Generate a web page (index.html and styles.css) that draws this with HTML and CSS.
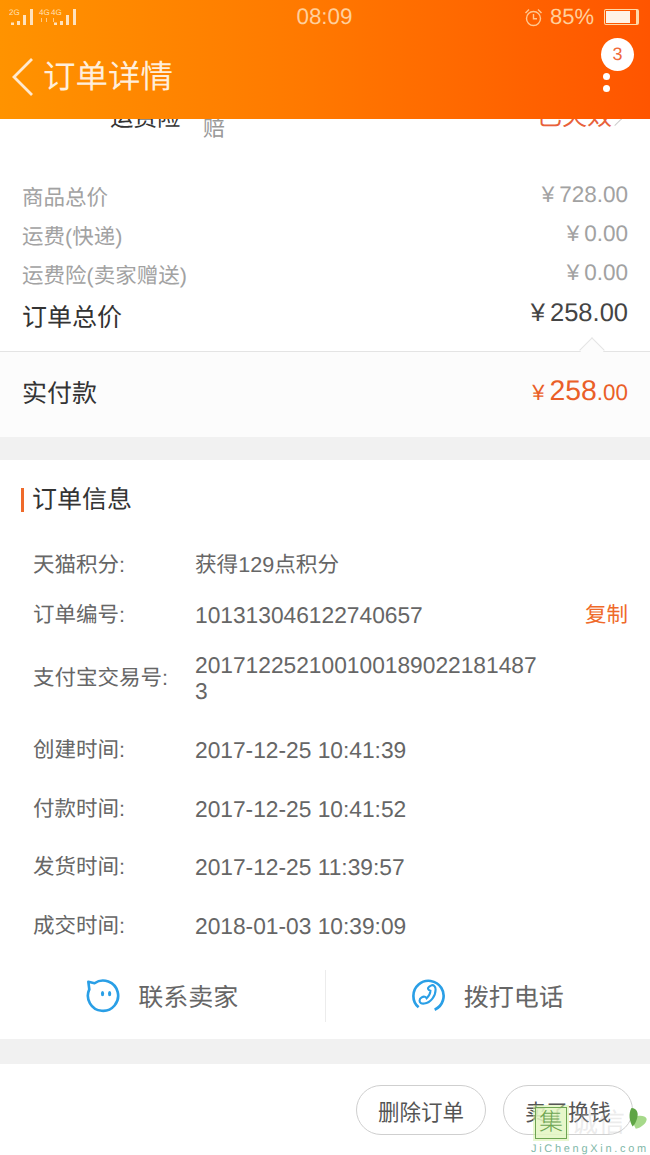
FILE: index.html
```html
<!doctype html>
<html lang="zh-CN">
<head>
  <meta charset="UTF-8">
  <title>订单详情</title>
  <link rel="stylesheet" href="styles.css">
</head>
<body>
  <div class="page">
    <header class="topbar">
      <div class="status">
        <svg class="signal" width="70" height="18" viewBox="0 0 70 18">
          <g fill="#ffe2bd">
            <path d="M2 14.500h3V17H2zM8 13h3v4H8zM14 7h3v10h-3zM21 1h3v16h-3z"/>
            <path d="M45 14.500h3V17h-3zM51 13h3v4h-3zM57 7h3v10h-3zM64 1h3v16h-3z"/>
            <text x="0" y="7" font-size="8">2G</text>
            <text x="30" y="7" font-size="8">4G</text>
            <text x="42" y="7" font-size="8">4G</text>
            <path d="M32 10h1v4h-1zM37 10h1v4h-1zM44 10h1v4h-1z" opacity=".7"/>
          </g>
        </svg>
        <div class="clock">08:09</div>
        <div class="status-right">
          <svg class="alarm" width="19" height="19" viewBox="0 0 19 19" fill="none" stroke="#ffc890" stroke-width="1.400"><circle cx="9.500" cy="10.500" r="7"/><path d="M9.500 6v4.800h3.500M1.500 5 5 1.500M17.500 5 14 1.500"/></svg>
          <span class="pct">85%</span>
          <div class="battery"><div class="battery-fill"></div></div>
        </div>
      </div>
      <div class="navbar">
        <svg class="back" width="24" height="40" viewBox="0 0 24 40" fill="none" stroke="#ffe9cf" stroke-width="2.800"><path d="M21 2 3 20l18 18"/></svg>
        <h1>订单详情</h1>
        <div class="more">
          <span class="dot"></span>
          <span class="dot"></span>
          <span class="badge">3</span>
        </div>
      </div>
    </header>

    <div class="clipped">
      <span class="clip-name">运费险</span>
      <span class="clip-note">赔</span>
      <span class="clip-status">已失效</span>
      <i class="chev"></i>
    </div>

    <section class="prices">
      <div class="price-row"><span>商品总价</span><span class="money">¥<b>728.00</b></span></div>
      <div class="price-row"><span>运费(快递)</span><span class="money">¥<b>0.00</b></span></div>
      <div class="price-row"><span>运费险(卖家赠送)</span><span class="money">¥<b>0.00</b></span></div>
      <div class="price-row total"><span>订单总价</span><span class="money">¥<b>258.00</b></span></div>
    </section>

    <section class="paid">
      <span class="paid-label">实付款</span>
      <span class="paid-money">¥<b>258</b><small>.00</small></span>
    </section>

    <section class="info">
      <h2>订单信息</h2>
      <div class="info-row r1"><span class="k">天猫积分:</span><span class="v">获得129点积分</span></div>
      <div class="info-row r2"><span class="k">订单编号:</span><span class="v">101313046122740657</span><span class="copy">复制</span></div>
      <div class="info-row r3"><span class="k">支付宝交易号:</span><span class="v wrap">2017122521001001890221814873</span></div>
      <div class="info-row r4 first"><span class="k">创建时间:</span><span class="v">2017-12-25 10:41:39</span></div>
      <div class="info-row r4"><span class="k">付款时间:</span><span class="v">2017-12-25 10:41:52</span></div>
      <div class="info-row r4"><span class="k">发货时间:</span><span class="v">2017-12-25 11:39:57</span></div>
      <div class="info-row r4"><span class="k">成交时间:</span><span class="v">2018-01-03 10:39:09</span></div>
      <div class="contact">
        <div class="contact-item">
          <svg width="34" height="34" viewBox="0 0 36 36" fill="none" stroke="#2a9fe6" stroke-width="2.800"><path d="M9 4.500A16 16 0 1 1 3.500 11L2.500 3z" stroke-linejoin="round"/><ellipse cx="17.500" cy="15.500" rx="1.700" ry="2.800" fill="#2a9fe6" stroke="none"/><ellipse cx="25" cy="15.500" rx="1.700" ry="2.800" fill="#2a9fe6" stroke="none"/></svg>
          <span>联系卖家</span>
        </div>
        <div class="contact-item">
          <svg width="34" height="34" viewBox="0 0 36 36" fill="none" stroke="#2a9fe6" stroke-width="2.800"><path d="M24 32.500A16 16 0 1 0 7 30"/><path d="M20 7c3-1.500 5 1 5 4 0 7-5 14-12 15-3 .5-5-1-5-3 0-3 4-5 6-4 1 .5 1.500 1.500 1.500 1.500 2-2 4-5 4-8 0 0-2-.5-2.500-2-.500-1.500 1-2.500 3-3.500z" stroke-width="2.200"/></svg>
          <span>拨打电话</span>
        </div>
      </div>
    </section>

    <footer class="actions">
      <button>删除订单</button>
      <button>卖了换钱</button>
    </footer>

    <div class="watermark">
      <div class="wm-top">
        <span class="wm-box">集</span>
        <span class="wm-text">诚信</span>
        <svg class="wm-leaf" width="20" height="26" viewBox="0 0 18 24"><path fill="#a6d98a" d="M6 10c3-3 10-2 11 1 0 4-5 8-10 9-2-3-3-7-1-10z"/><path fill="#5fa545" d="M3 1c5 0 7 5 5 10-1 3-2 5-4 7C1 13 0 6 3 1z"/></svg>
      </div>
      <div class="wm-url">JiChengXin.com</div>
    </div>
  </div>
</body>
</html>
```

FILE: styles.css
```css
* {
    box-sizing: border-box;
}
html, body {
    margin: 0;
    padding: 0;
}
body {
    background-color: #fff;
    font-family: "Liberation Sans", "Noto Sans CJK SC", sans-serif;
    text-rendering: geometricPrecision;
    color: #333;
}
.page {
    position: relative;
    width: 650px;
    height: 1155px;
    overflow: hidden;
    display: flex;
    flex-direction: column;
}

/* top bar */
.topbar {
    height: 119px;
    flex-shrink: 0;
    background: linear-gradient(90deg, #ff9300 0%, #ff7a00 45%, #ff5500 100%);
    color: #fff;
}
.status {
    height: 34px;
    display: grid;
    grid-template-columns: 1fr auto 1fr;
    align-items: center;
    padding: 0 10px 0 9px;
}
.clock {
    font-size: 22.400px;
    color: #ffcf9c;
}
.status-right {
    display: flex;
    align-items: center;
    justify-content: flex-end;
    gap: 7px;
}
.pct {
    font-size: 22px;
    color: #ffcf9c;
}
.battery {
    width: 35px;
    height: 16px;
    border: 1px solid #ffd9a8;
    border-right-width: 3px;
    border-radius: 2px;
    padding: 1px;
    margin-left: 3px;
    margin-right: 1px;
}
.battery-fill {
    width: 82%;
    height: 100%;
    background-color: #fff3e6;
}
.navbar {
    height: 85px;
    display: flex;
    align-items: center;
    padding: 0 0 0 11px;
    position: relative;
}
.back {
    margin-top: 1px;
}
.navbar h1 {
    margin: 0 0 0 8px;
    font-size: 32.500px;
    font-weight: 400;
    color: #ffeeda;
    line-height: 1;
    position: relative;
    top: 1px;
}
.more {
    position: absolute;
    left: 603px;
    top: 39px;
    width: 8px;
    display: flex;
    flex-direction: column;
    gap: 5px;
}
.dot {
    width: 7px;
    height: 7px;
    border-radius: 50%;
    background-color: #fff;
}
.badge {
    position: absolute;
    left: -2px;
    top: -35px;
    width: 33px;
    height: 33px;
    border-radius: 50%;
    background-color: #fff;
    color: #f0693a;
    font-size: 18px;
    line-height: 33px;
    text-align: center;
}

/* row cut off by the top bar */
.clipped {
    height: 58px;
    flex-shrink: 0;
    overflow: hidden;
    position: relative;
    background-color: #fff;
}
.clip-name {
    position: absolute;
    left: 110px;
    top: -20px;
    font-size: 23.500px;
    color: #333;
}
.clip-note {
    position: absolute;
    left: 203px;
    top: -8px;
    font-size: 22px;
    color: #999;
}
.clip-status {
    position: absolute;
    left: 537px;
    top: -22px;
    font-size: 25px;
    color: #e8613a;
}
.chev {
    position: absolute;
    left: 610px;
    top: -5px;
    width: 10px;
    height: 10px;
    border-top: 1px solid #ccc;
    border-right: 1px solid #ccc;
    transform: rotate(45deg);
}

/* prices */
.prices {
    padding: 0 22px;
    height: 174px;
    flex-shrink: 0;
    position: relative;
}
.prices::after {
    content: "";
    position: absolute;
    left: 583px;
    bottom: -8px;
    width: 17px;
    height: 17px;
    background-color: #fcfcfc;
    border-top: 1px solid #e4e4e4;
    border-left: 1px solid #e4e4e4;
    transform: rotate(45deg);
}
.price-row {
    height: 39px;
    display: flex;
    justify-content: space-between;
    align-items: center;
    font-size: 21.500px;
    color: #a2a2a2;
}
.money {
    font-size: 22.500px;
    color: #a2a2a2;
    position: relative;
    top: -2px;
}
.money b {
    font-weight: 400;
    margin-left: 5px;
}
.price-row.total {
    height: 43px;
    font-size: 25px;
    color: #333;
}
.price-row.total .money {
    font-size: 25.500px;
    color: #444;
}
.paid {
    height: 109px;
    flex-shrink: 0;
    background-color: #fcfcfc;
    border-top: 1px solid #e4e4e4;
    border-bottom: 23px solid #f1f1f1;
    display: flex;
    justify-content: space-between;
    align-items: center;
    padding: 0 22px 6px;
}
.paid-label {
    font-size: 25px;
    color: #333;
}
.paid-money {
    color: #ea5f28;
    font-size: 22px;
}
.paid-money b {
    font-weight: 400;
    font-size: 28.400px;
    margin-left: 5px;
}
.paid-money small {
    font-size: 22.400px;
}

/* order info */
.info {
    flex-shrink: 0;
    height: 604px;
    border-bottom: 25px solid #f1f1f1;
    background-color: #fff;
    display: flex;
    flex-direction: column;
}
.info h2 {
    margin: 28px 0 28px 21px;
    padding-left: 8px;
    height: 24px;
    line-height: 24px;
    font-size: 25px;
    font-weight: 400;
    color: #333;
    border-left: 3px solid #ef6a2a;
}
.info-row {
    display: flex;
    align-items: center;
    padding-left: 33px;
    font-size: 21.500px;
    line-height: 26px;
    color: #666;
    flex-shrink: 0;
}
.k {
    width: 162px;
    flex-shrink: 0;
}
.v {
    font-size: 22.750px;
}
.r1 .v {
    font-size: 21.600px;
}
.wrap {
    width: 344px;
    word-break: break-all;
}
.copy {
    margin-left: auto;
    margin-right: 22px;
    color: #ef6a2a;
}
.r1, .r2 {
    height: 50px;
}
.r3 {
    height: 76px;
}
.r4 {
    height: 58.500px;
}
.r4.first {
    margin-top: 5px;
}
.contact {
    height: 52px;
    margin-top: 15px;
    display: flex;
    flex-shrink: 0;
}
.contact-item {
    flex: 1;
    display: flex;
    align-items: center;
    justify-content: center;
    gap: 18px;
    padding-bottom: 1px;
    font-size: 25px;
    color: #666;
}
.contact-item + .contact-item {
    border-left: 1px solid #ececec;
}

/* bottom buttons */
.actions {
    flex: 1;
    display: flex;
    justify-content: flex-end;
    align-items: flex-start;
    gap: 17px;
    padding: 21px 17px 0 0;
    background-color: #fff;
}
.actions button {
    width: 130px;
    height: 50px;
    border: 1px solid #cfcfcf;
    border-radius: 25px;
    background-color: #fff;
    font-family: inherit;
    font-size: 21.500px;
    color: #555;
    padding: 0;
}

/* watermark over the corner */
.watermark {
    position: absolute;
    left: 531px;
    top: 1107px;
    width: 119px;
}
.wm-top {
    position: relative;
    display: flex;
    align-items: center;
    height: 32px;
    padding-left: 4px;
}
.wm-box {
    width: 32px;
    height: 32px;
    border: 1px solid #6ea552;
    outline: 2px solid rgba(210, 240, 160, .5);
    background-color: rgba(228, 246, 195, .88);
    color: #6ea552;
    font-size: 24px;
    font-weight: 300;
    line-height: 29px;
    text-align: center;
    flex-shrink: 0;
}
.wm-text {
    font-size: 27px;
    line-height: 32px;
    color: rgba(190, 190, 190, .3);
    margin-left: 4px;
}
.wm-leaf {
    position: absolute;
    left: 97px;
    top: 0;
}
.wm-url {
    font-size: 11px;
    line-height: 14px;
    letter-spacing: 2.700px;
    color: #7fb8a8;
    margin-top: 3px;
    white-space: nowrap;
}
```
